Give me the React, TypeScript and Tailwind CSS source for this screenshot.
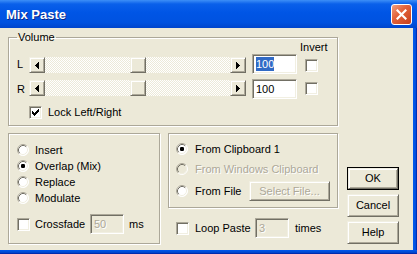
import React from "react";

const raised =
  "bg-[#ece9d8] border border-t-[#f1efe2] border-l-[#f1efe2] border-r-[#716f64] border-b-[#716f64] shadow-[inset_1px_1px_0_#ffffff,inset_-1px_-1px_0_#aca899]";
const sunken =
  "border border-t-[#aca899] border-l-[#aca899] border-r-white border-b-white shadow-[inset_1px_1px_0_#716f64,inset_-1px_-1px_0_#f1efe2]";
const disabledText = "text-[#aca899] [text-shadow:1px_1px_0_#ffffff]";
const groupBox = "border border-[#aca899] shadow-[inset_1px_1px_0_#ffffff,1px_1px_0_#ffffff]";

function Arrow({ dir }: { dir: "left" | "right" }) {
  return (
    <svg width="4" height="7" viewBox="0 0 4 7" shapeRendering="crispEdges">
      {dir === "left" ? (
        <path d="M0 3.5 L4 0 L4 7 Z" fill="#000" />
      ) : (
        <path d="M4 3.5 L0 0 L0 7 Z" fill="#000" />
      )}
    </svg>
  );
}

function HScroll({ thumb, className = "" }: { thumb: number; className?: string }) {
  return (
    <div
      className={`flex h-[16px] w-[217px] bg-[repeating-conic-gradient(#ffffff_0_25%,#ece9d8_0_50%)] bg-[length:2px_2px] ${className}`}
    >
      <div className={`${raised} w-[16px] h-[16px] flex items-center justify-center`}>
        <Arrow dir="left" />
      </div>
      <div className={`${raised} w-[16px] h-[16px]`} style={{ marginLeft: thumb }} />
      <div className="flex-1" />
      <div className={`${raised} w-[16px] h-[16px] flex items-center justify-center`}>
        <Arrow dir="right" />
      </div>
    </div>
  );
}

function Check({ checked = false }: { checked?: boolean }) {
  return (
    <div className={`${sunken} w-[13px] h-[13px] bg-white shrink-0 flex items-center justify-center`}>
      {checked && (
        <svg width="7" height="7" viewBox="0 0 7 7" shapeRendering="crispEdges">
          <path d="M0 2h1v1h1v1h1v-1h1v-1h1v-1h1v-1h1v3h-1v1h-1v1h-1v1h-1v1h-1v-1h-1v-1h-1z" fill="#000" />
        </svg>
      )}
    </div>
  );
}

function Radio({ checked = false, disabled = false }: { checked?: boolean; disabled?: boolean }) {
  return (
    <svg width="12" height="12" viewBox="0 0 12 12" className="shrink-0">
      <circle cx="6" cy="6" r="5.5" fill={disabled ? "#ece9d8" : "#ffffff"} />
      <path d="M2.11 9.89 A5.5 5.5 0 0 1 9.89 2.11" fill="none" stroke="#aca899" strokeWidth="1" />
      <path d="M9.89 2.11 A5.5 5.5 0 0 1 2.11 9.89" fill="none" stroke="#ffffff" strokeWidth="1" />
      <path d="M2.82 9.18 A4.5 4.5 0 0 1 9.18 2.82" fill="none" stroke="#716f64" strokeWidth="1" />
      <path d="M9.18 2.82 A4.5 4.5 0 0 1 2.82 9.18" fill="none" stroke="#f1efe2" strokeWidth="1" />
      {checked && <rect x="4" y="4" width="4" height="4" rx="1.2" fill="#000" />}
    </svg>
  );
}

function Field({ value, selected = false, disabled = false, className = "" }: { value: string; selected?: boolean; disabled?: boolean; className?: string }) {
  return (
    <div
      className={`${sunken} h-[20px] flex items-center pl-[3px] text-[11px] ${disabled ? `bg-[#ece9d8] ${disabledText}` : "bg-white"} ${className}`}
    >
      {selected ? <span className="bg-[#316ac5] text-white leading-[14px]">{value}</span> : value}
    </div>
  );
}

function Button({ label, isDefault = false, disabled = false, className = "" }: { label: string; isDefault?: boolean; disabled?: boolean; className?: string }) {
  const inner = (
    <div className={`${raised} h-full w-full flex items-center justify-center ${disabled ? disabledText : ""}`}>{label}</div>
  );
  if (isDefault)
    return <div className={`border border-black ${className}`}>{inner}</div>;
  return <div className={className}>{inner}</div>;
}

export default function App() {
  return (
    <div className="w-[417px] h-[254px] flex flex-col overflow-hidden font-['Liberation_Sans',Arial,sans-serif] text-[11px] leading-[13px] text-black">
      {/* Title bar */}
      <div className="h-[28px] shrink-0 flex items-center pl-[6px] pr-[5px] bg-[linear-gradient(to_bottom,#3d8ff7_0px,#0a60ea_4px,#0055e5_45%,#0052e0_80%,#0045cc_100%)]">
        <span className="text-white font-bold text-[13px] [text-shadow:1px_1px_0_#0a2a8a]">Mix Paste</span>
        <div className="ml-auto w-[21px] h-[21px] rounded-[3px] border border-white bg-[linear-gradient(135deg,#f0a080_0%,#e3643c_40%,#c8401c_100%)] flex items-center justify-center">
          <svg width="11" height="11" viewBox="0 0 11 11">
            <path d="M1.5 1.5 L9.5 9.5 M9.5 1.5 L1.5 9.5" stroke="#fff" strokeWidth="2.2" strokeLinecap="square" />
          </svg>
        </div>
      </div>

      <div className="flex flex-1 min-h-0">
        <div className="flex-1 bg-[#ece9d8] pl-[8px] pt-[3px] flex flex-col">
          {/* Volume group */}
          <fieldset className={`w-[330px] h-[95px] ${groupBox}`}>
            <legend className="ml-[8px] px-[1px]">Volume</legend>
            <div className="pl-[8px] flex flex-col">
              <div className="-mt-[3px] h-[13px] ml-[283px]">Invert</div>
              <div className="flex h-[20px]">
                <div className="w-[12px] self-center">L</div>
                <HScroll thumb={85} className="mt-[3px]" />
                <Field value="100" selected className="ml-[6px] w-[45px]" />
                <div className="ml-[8px] mt-[5px]">
                  <Check />
                </div>
              </div>
              <div className="flex h-[20px] mt-[5px]">
                <div className="w-[12px] self-center">R</div>
                <HScroll thumb={85} className="mt-[1px]" />
                <Field value="100" className="ml-[6px] w-[45px]" />
                <div className="ml-[8px] mt-[3px]">
                  <Check />
                </div>
              </div>
              <div className="flex items-center mt-[7px] ml-[12px] gap-[6px]">
                <Check checked />
                <span>Lock Left/Right</span>
              </div>
            </div>
          </fieldset>

          {/* Bottom section */}
          <div className="flex mt-[7px]">
            <div className={`w-[152px] h-[111px] ${groupBox} pl-[8px] pt-[8px] flex flex-col`}>
              {[
                ["Insert", false],
                ["Overlap (Mix)", true],
                ["Replace", false],
                ["Modulate", false],
              ].map(([label, on]) => (
                <div key={label as string} className="h-[16px] flex items-center gap-[6px]">
                  <Radio checked={on as boolean} />
                  <span>{label as string}</span>
                </div>
              ))}
              <div className="flex items-center h-[20px] mt-[8px]">
                <Check />
                <span className="ml-[5px] w-[55px]">Crossfade</span>
                <Field value="50" disabled className="w-[34px]" />
                <span className="ml-[5px]">ms</span>
              </div>
            </div>

            <div className="ml-[8px] flex flex-col">
              <div className={`w-[170px] h-[75px] ${groupBox} pl-[7px] pt-[5px] flex flex-col`}>
                <div className="h-[20px] flex items-center gap-[7px]">
                  <Radio checked />
                  <span>From Clipboard 1</span>
                </div>
                <div className="h-[20px] flex items-center gap-[7px]">
                  <Radio disabled />
                  <span className={disabledText}>From Windows Clipboard</span>
                </div>
                <div className="h-[20px] mt-[2px] flex items-center">
                  <Radio />
                  <span className="ml-[7px] w-[54px]">From File</span>
                  <Button label="Select File..." disabled className="w-[81px] h-[20px]" />
                </div>
              </div>
              <div className="flex items-center h-[20px] mt-[10px]">
                <div className="ml-[8px]">
                  <Check />
                </div>
                <span className="ml-[6px] w-[60px]">Loop Paste</span>
                <Field value="3" disabled className="w-[34px]" />
                <span className="ml-[6px]">times</span>
              </div>
            </div>

            <div className="ml-[9px] w-[52px] mt-[34px] flex flex-col gap-[4px]">
              <Button label="OK" isDefault className="h-[23px]" />
              <Button label="Cancel" className="h-[23px]" />
              <Button label="Help" className="h-[23px]" />
            </div>
          </div>
        </div>
        <div className="w-[4px] bg-[linear-gradient(to_right,#0058ee,#0052e0_60%,#001ea0)]" />
      </div>
      <div className="h-[4px] shrink-0 bg-[linear-gradient(to_bottom,#0058ee,#0048d0_60%,#001ea0)]" />
    </div>
  );
}
